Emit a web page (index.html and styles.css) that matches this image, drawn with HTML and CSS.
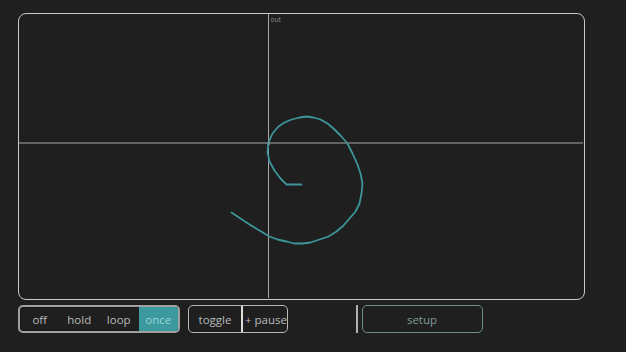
FILE: index.html
```html
<!DOCTYPE html>
<html lang="en">
<head>
    <meta charset="UTF-8">
    <meta name="viewport" content="width=device-width, initial-scale=1.0">
    <title>Scope</title>
    <link rel="stylesheet" href="styles.css">
</head>
<body>

<div class="app">
    <div class="scope">
        <svg class="scope-canvas" width="564" height="284" viewBox="19.5 14.5 564 284">
            <line x1="19.5" y1="143.5" x2="583.5" y2="143.5" class="axis"/>
            <line x1="269" y1="14.5" x2="269" y2="298.5" class="axis"/>
            <text x="271" y="22" class="axis-label">out</text>
            <polyline class="trace" points="302,185 287,185 281,179 275,171 270,162 268,153 269,143 273,134 279,127 285,123 292,120 300,118 307,117 314,118 321,120 328,124 334,129 341,136 348,144 353,154 358,165 361,174 363,184 362,194 360,204 356,212 350,219 344,226 337,232 329,237 320,240 311,243 303,244 295,244 287,242 278,240 270,237 260,231 250,225 241,219 232,213"/>
            <circle cx="269" cy="144" r="1.8" class="dot"/>
        </svg>
    </div>

    <div class="controls">
        <div class="segmented">
            <button class="seg">off</button>
            <button class="seg">hold</button>
            <button class="seg">loop</button>
            <button class="seg active">once</button>
        </div>

        <div class="pair">
            <button class="pair-btn">toggle</button>
            <button class="pair-btn">+ pause</button>
        </div>

        <div class="separator"></div>

        <button class="setup">setup</button>
    </div>
</div>

</body>
</html>
```

FILE: styles.css
```css
body {
    margin: 0;
    background-color: #1f1f1f;
    font-family: 'Open Sans', sans-serif;
}
.app {
    padding: 13px 41px 0 18px;
}
.scope {
    width: 567px;
    height: 287px;
    box-sizing: border-box;
    border: 1.5px solid #c8c8c8;
    border-radius: 8px;
    overflow: hidden;
}
.scope-canvas {
    display: block;
}
.axis {
    stroke: #a8a8a8;
    stroke-width: 1;
}
.axis-label {
    font-family: 'Open Sans', sans-serif;
    font-size: 6.5px;
    fill: #8a8a8a;
}
.trace {
    fill: none;
    stroke: #3d9599;
    stroke-width: 1.8;
    stroke-linejoin: round;
    stroke-linecap: round;
}
.dot {
    fill: #6c8c8e;
}
.controls {
    display: flex;
    align-items: center;
    margin-top: 5px;
    height: 28px;
}
button {
    font-family: inherit;
    font-size: 11.5px;
    color: #bababa;
    background: none;
    border: none;
    padding: 0;
    cursor: pointer;
}
.segmented {
    display: flex;
    width: 162px;
    height: 28px;
    box-sizing: border-box;
    border: 2px solid #a0a0a0;
    border-radius: 5px;
    box-shadow: inset 0 0 0 1px #161616;
    overflow: hidden;
}
.seg {
    flex: 1;
}
.seg.active {
    background-color: #3c9a9e;
    color: #9ad6d8;
}
.pair {
    display: flex;
    margin-left: 8px;
    width: 100px;
    height: 28px;
    box-sizing: border-box;
    border: 1.5px solid #b8b8b8;
    border-radius: 5px;
}
.pair-btn {
    width: 52px;
}
.pair-btn + .pair-btn {
    flex: 1;
    padding-left: 2px;
    border-left: 2px solid #dcdcdc;
}
.separator {
    width: 1.5px;
    height: 28px;
    background-color: #b0b0b0;
    margin-left: 68px;
}
.setup {
    margin-left: 4px;
    width: 121px;
    height: 28px;
    box-sizing: border-box;
    border: 1.5px solid #6f8f8c;
    border-radius: 5px;
    color: #7e9c99;
}
```
